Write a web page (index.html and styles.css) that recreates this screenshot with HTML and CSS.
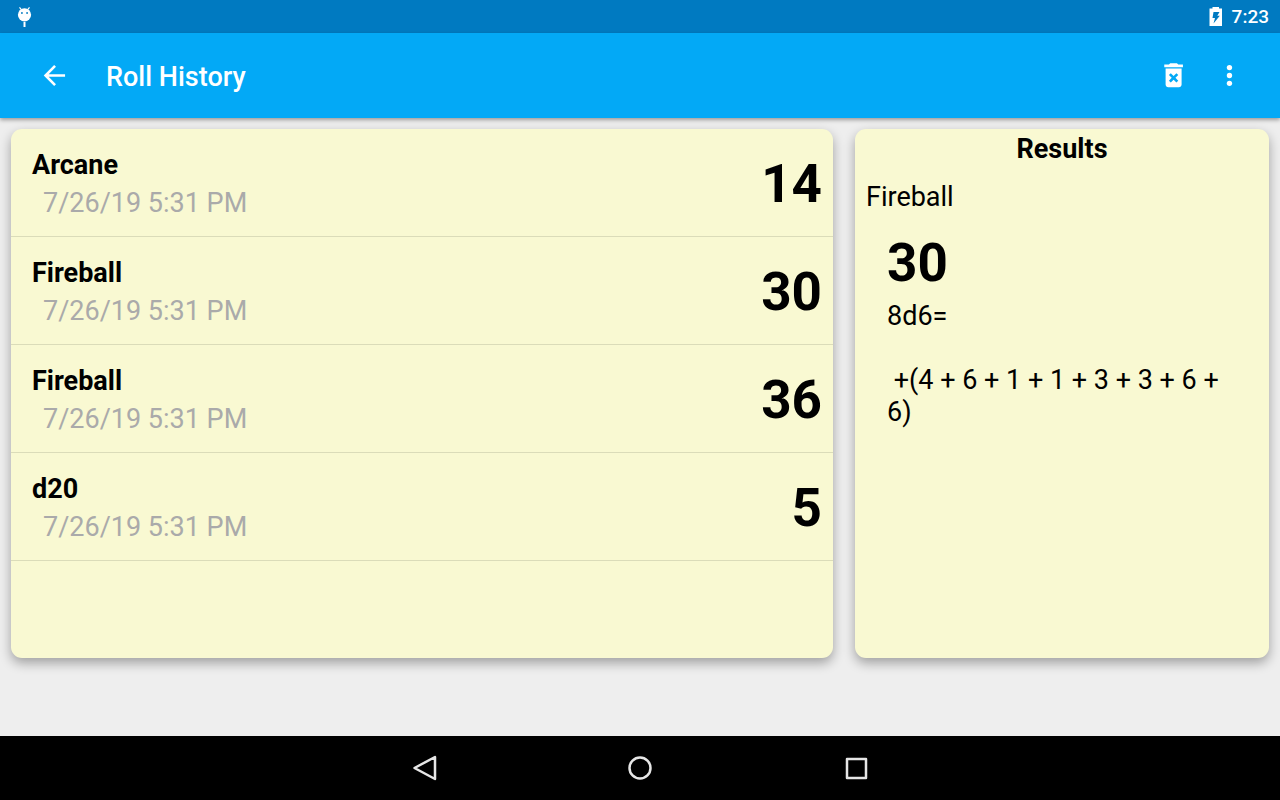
FILE: index.html
```html
<!DOCTYPE html>
<html lang="en">
<head>
<meta charset="utf-8">
<meta name="viewport" content="width=device-width, initial-scale=1">
<title>Roll History</title>
<link rel="stylesheet" href="styles.css">
</head>
<body>
<div class="status-bar">
  <svg class="debug-icon" width="16" height="22" viewBox="0 0 16 22" aria-hidden="true">
    <path d="M3.500 1.300l2 2.500M13.500 1.300l-2 2.500" stroke="#fff" stroke-width="1.200"/>
    <circle cx="8.500" cy="8.800" r="6.600" fill="#fff"/>
    <path d="M5 7h1.800M10.200 7h1.800" stroke="#007ac1" stroke-width="1.400"/>
    <path d="M8.500 16v5" stroke="#fff" stroke-width="2"/>
  </svg>
  <div class="status-right">
    <svg width="14" height="20" viewBox="0 0 14 20" aria-hidden="true">
      <path fill="#fff" fill-rule="evenodd" d="M.5 1.500h3V0h6.500v1.500h3V19H.500zM4.500 5L3.500 11H6L4.500 16.500 10.800 8.700H8.300L10.500 5z"/>
    </svg>
    <time class="clock">7:23</time>
  </div>
</div>
<header class="app-bar">
  <button class="icon-button" type="button" aria-label="Back">
    <svg width="32" height="32" viewBox="0 0 24 24"><path fill="#fff" d="M20.300 10.600H8l5.500-5.500-1.400-1.400L4.300 11.600l7.800 7.900 1.400-1.400L8 12.600h12.300z"/></svg>
  </button>
  <h1 class="app-title">Roll History</h1>
  <button class="icon-button" type="button" aria-label="Delete all">
    <svg width="32" height="32" viewBox="0 0 24 24"><path fill="#fff" fill-rule="evenodd" d="M5.700 18.400c0 1.100.9 2 2 2h8c1.100 0 2-.9 2-2V6.400h-12v12zm2.500-7.100l1.400-1.400 2.100 2.100 2.100-2.100 1.400 1.400-2.100 2.100 2.100 2.100-1.400 1.400-2.100-2.100-2.100 2.100-1.400-1.400 2.100-2.100zM15.200 3.400l-1-1h-5l-1 1H4.700v2h14v-2z"/></svg>
  </button>
  <button class="icon-button" type="button" aria-label="More options">
    <svg width="32" height="32" viewBox="0 0 24 24" fill="#fff"><circle cx="11.600" cy="5.700" r="2"/><circle cx="11.600" cy="11.600" r="2"/><circle cx="11.600" cy="17.500" r="2"/></svg>
  </button>
</header>
<main class="content">
  <ul class="card history">
    <li class="roll"><div><h2 class="roll-name">Arcane</h2><p class="roll-date">7/26/19 5:31 PM</p></div><strong class="total">14</strong></li>
    <li class="roll"><div><h2 class="roll-name">Fireball</h2><p class="roll-date">7/26/19 5:31 PM</p></div><strong class="total">30</strong></li>
    <li class="roll"><div><h2 class="roll-name">Fireball</h2><p class="roll-date">7/26/19 5:31 PM</p></div><strong class="total">36</strong></li>
    <li class="roll"><div><h2 class="roll-name">d20</h2><p class="roll-date">7/26/19 5:31 PM</p></div><strong class="total">5</strong></li>
  </ul>
  <section class="card results">
    <h2 class="results-title">Results</h2>
    <p class="results-name">Fireball</p>
    <div class="results-detail">
      <strong class="total">30</strong>
      <p class="formula">8d6=

 +(4 + 6 + 1 + 1 + 3 + 3 + 6 + 6)</p>
    </div>
  </section>
</main>
<nav class="nav-bar" aria-label="System">
  <button class="nav-button" type="button" aria-label="Back">
    <svg width="32" height="32" viewBox="0 0 32 32"><path d="M6.500 16L27 5v22z"/></svg>
  </button>
  <button class="nav-button" type="button" aria-label="Home">
    <svg width="32" height="32" viewBox="0 0 32 32"><circle cx="16" cy="16" r="10.500"/></svg>
  </button>
  <button class="nav-button" type="button" aria-label="Recent apps">
    <svg width="32" height="32" viewBox="0 0 32 32"><path d="M7 7h19v19H7z"/></svg>
  </button>
</nav>
</body>
</html>
```
FILE: styles.css
```css
* {
  box-sizing: border-box;
}

body {
  margin: 0;
  min-height: 100vh;
  display: flex;
  flex-direction: column;
  background: #eee;
  color: #000;
  font-family: Roboto, sans-serif;
  font-size: 27px;
  line-height: 32px;
}

h1, h2, p, ul {
  margin: 0;
  padding: 0;
  font-size: inherit;
}

button {
  display: grid;
  place-items: center;
  padding: 0;
  border: 0;
  background: none;
  cursor: pointer;
}

.status-bar {
  display: flex;
  justify-content: space-between;
  align-items: center;
  height: 33px;
  padding: 0 11px 0 16px;
  background: #007ac1;
}

.status-right {
  display: flex;
  align-items: center;
  gap: 9px;
}

.clock {
  padding-top: 1px;
  color: #fff;
  font-size: 19px;
  font-weight: 500;
}

.app-bar {
  position: relative;
  display: flex;
  align-items: center;
  height: 85px;
  padding: 0 22px 0 26px;
  background: #03a9f6;
  color: #fff;
  box-shadow: 0 2px 4px rgba(0, 0, 0, 0.35);
}

.icon-button {
  width: 56px;
  height: 56px;
}

.app-title {
  flex: 1;
  padding-left: 24px;
  padding-top: 2px;
  font-weight: 500;
}

.content {
  flex: 1;
  display: grid;
  grid-template-columns: 411fr 207fr;
  gap: 22px;
  padding: 11px 11px 78px;
}

.card {
  border-radius: 11px;
  background: #f9f9d2;
  box-shadow: 0 5px 12px rgba(0, 0, 0, 0.33);
}

.history {
  list-style: none;
}

.roll {
  display: flex;
  justify-content: space-between;
  align-items: center;
  height: 108px;
  padding: 3px 11px 0 21px;
  border-bottom: 1px solid #dbdcb9;
}

.roll-name {
  font-weight: 700;
}

.roll-date {
  padding-left: 11px;
  margin-top: 6px;
  color: #aaa;
}

.total {
  display: block;
  font-size: 53px;
  line-height: 62px;
  font-weight: 700;
}

.results {
  padding: 4px 11px;
}

.results-title {
  font-weight: 700;
  text-align: center;
}

.results-name {
  margin-top: 16px;
}

.results-detail {
  padding: 19px 21px 0;
}

.formula {
  margin-top: 6px;
  white-space: pre-wrap;
}

.nav-bar {
  display: flex;
  justify-content: center;
  align-items: center;
  gap: 136px;
  height: 64px;
  background: #000;
}

.nav-button {
  width: 80px;
  height: 64px;
}

.nav-button svg {
  fill: none;
  stroke: #e6e6e6;
  stroke-width: 2.5;
  stroke-linejoin: round;
}
```
